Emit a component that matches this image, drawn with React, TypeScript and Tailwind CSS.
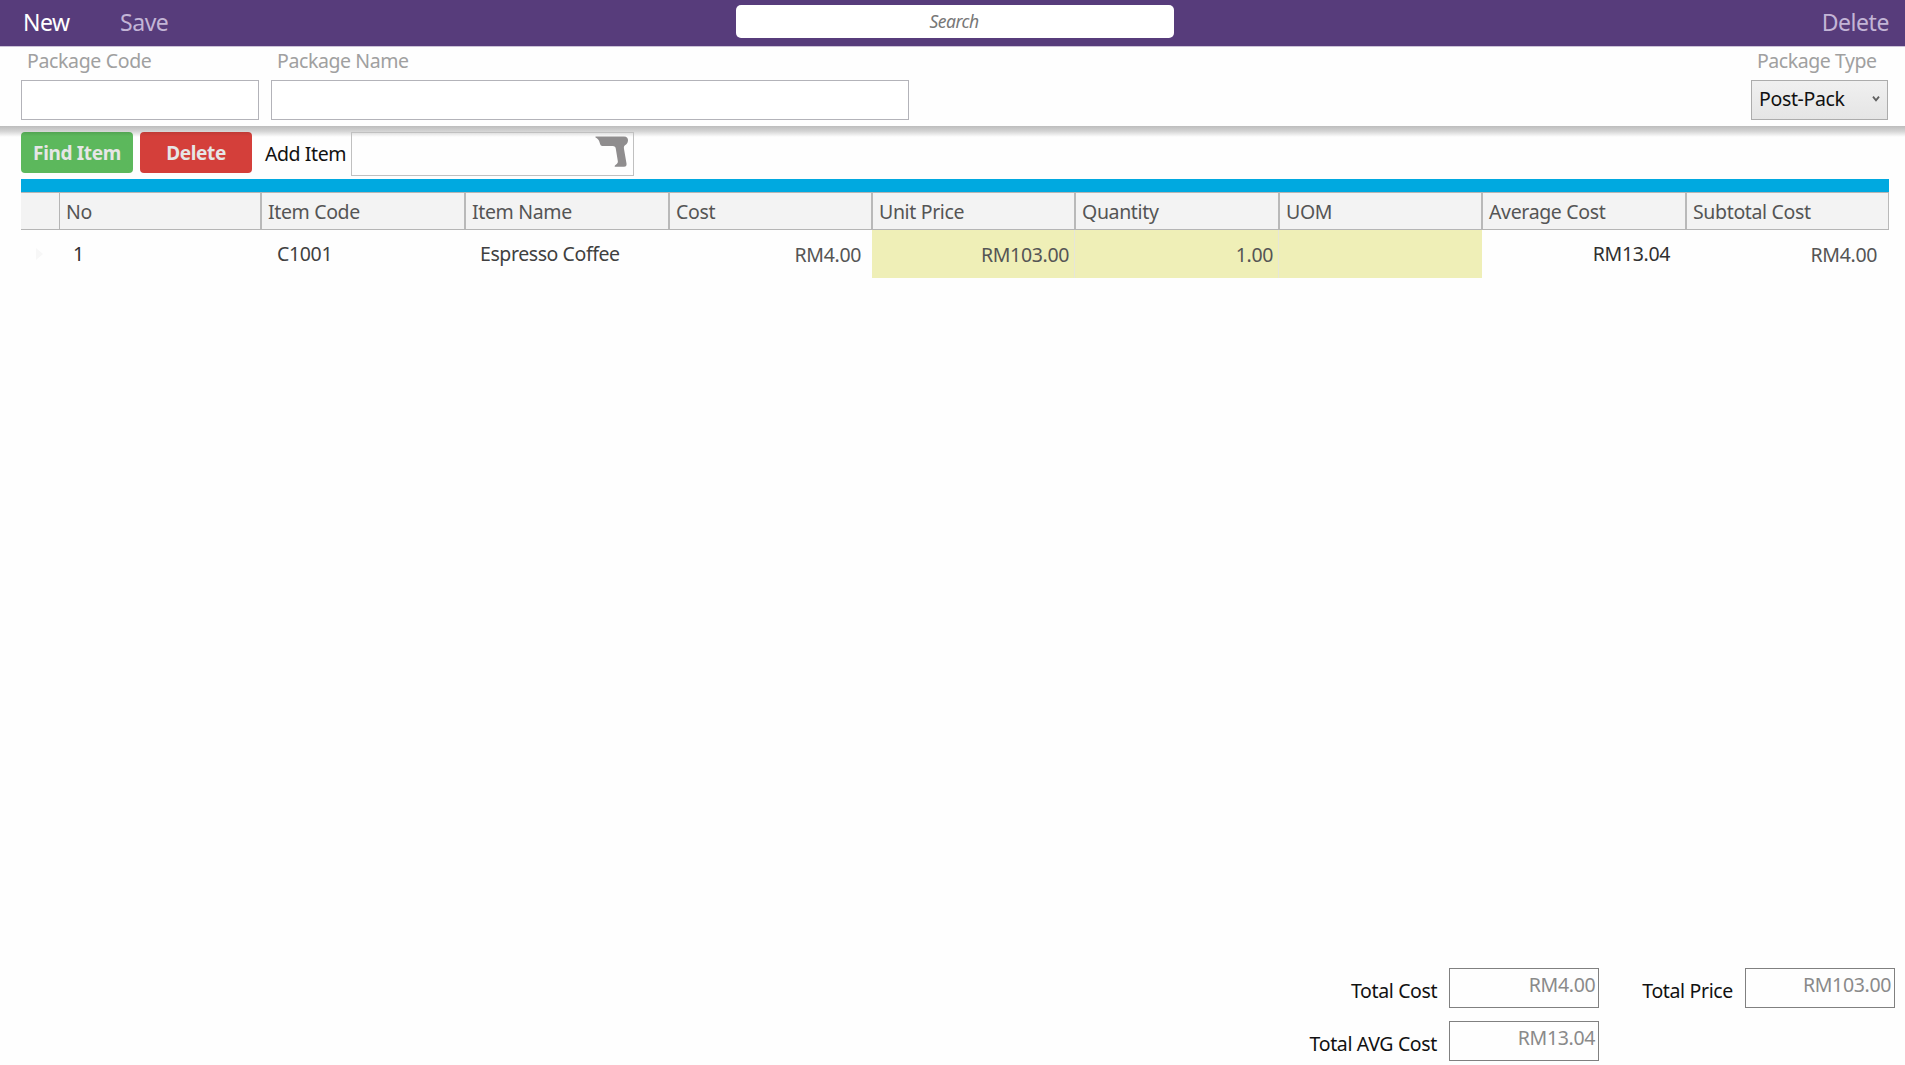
import React from 'react';

interface Column {
  title: string;
  value: string;
  head: string;
  cell: string;
}

// each column carries its own header and cell spacing
const columns: Column[] = [
  { title: 'No', value: '1', head: 'w-[202px]', cell: 'pl-[14px] text-[#303030]' },
  { title: 'Item Code', value: 'C1001', head: 'w-[204px]', cell: 'pl-[16px] text-[#404040]' },
  { title: 'Item Name', value: 'Espresso Coffee', head: 'w-[204px]', cell: 'pl-[15px] tracking-[-0.42px] text-[#404040]' },
  { title: 'Cost', value: 'RM4.00', head: 'w-[203px]', cell: 'justify-end pr-[11px] pt-[2px]' },
  { title: 'Unit Price', value: 'RM103.00', head: 'w-[203px]', cell: 'justify-end pr-[5px] pt-[2px] bg-[#efefb7] border-r border-[#e6e6d8]' },
  { title: 'Quantity', value: '1.00', head: 'w-[204px]', cell: 'justify-end pr-[5px] pt-[2px] bg-[#efefb7] border-r border-[#e6e6d8]' },
  { title: 'UOM', value: '', head: 'w-[203px]', cell: 'bg-[#efefb7]' },
  { title: 'Average Cost', value: 'RM13.04', head: 'w-[204px]', cell: 'justify-end pr-[16px] text-[#303030]' },
  { title: 'Subtotal Cost', value: 'RM4.00', head: 'w-[202px]', cell: 'justify-end pr-[11px] pt-[2px]' },
];

const ScannerIcon: React.FC = () => (
  <svg width="34" height="32" viewBox="0 0 34 32" fill="#8f8d8e">
    <path d="M0.5 0.5H29C32 0.5 33.2 2.2 33 4.5C32.8 7.2 31.5 8.3 30 9.3C28.8 10.1 28.8 11.5 29 13L31.5 27.5C31.8 29.5 31 30.8 29 30.8H20.5C19.3 30.8 19.5 29.8 20.2 29.2L22 27.7C22.8 27 23 26 22.8 25L20.8 12.8C20.6 11 19.6 10 17.8 10H7.5C6 10 5.5 9.2 5.1 8L4.3 5.6C3.7 3.6 2.5 2.2 0.5 1.4Z" />
  </svg>
);

const Total: React.FC<{ label: string; value: string }> = ({ label, value }) => (
  <div className="flex">
    <span className="mt-[7px] mr-[12px] leading-[31px] tracking-[-0.35px] text-[#111]">{label}</span>
    <div className="flex h-10 w-[150px] justify-end border border-[#808080] pt-[3px] pr-[3px] leading-[26px] text-[#8a8a8a]">
      {value}
    </div>
  </div>
);

const App: React.FC = () => {
  return (
    <div className="flex h-[1065px] w-[1905px] flex-col overflow-hidden bg-[#fefefe] font-['Noto_Sans','Open_Sans',sans-serif] text-[19.5px] tracking-[-0.35px] text-[#555] whitespace-nowrap">
      {/* Top bar */}
      <header className="flex h-[46px] shrink-0 bg-[#573c7b] pr-[16px] pl-[23px] text-[23px] leading-[44px] tracking-[-0.45px] text-[#c3b5d6]">
        <span className="w-[97px] text-white">New</span>
        <span className="w-[616px]">Save</span>
        <div className="mt-[5px] h-[33px] w-[438px] rounded-[5px] bg-white pr-[2px] text-center text-[17.5px] leading-[33px] tracking-[-0.5px] text-[#777] italic">
          Search
        </div>
        <span className="ml-auto">Delete</span>
      </header>

      {/* Package fields */}
      <section className="flex h-20 shrink-0 border-t border-[#cbc2d7] pr-[17px] pl-[21px] text-[#a0a0a0]">
        <div className="mr-3">
          <div className="h-[33px] pl-[6px] leading-[28px]">Package Code</div>
          <div className="h-10 w-[238px] border border-[#b3b3b9] bg-white" />
        </div>
        <div>
          <div className="h-[33px] pl-[6px] leading-[28px] tracking-[-0.4px]">Package Name</div>
          <div className="h-10 w-[638px] border border-[#b3b3b9] bg-white" />
        </div>
        <div className="ml-auto">
          <div className="h-[33px] pl-[6px] leading-[28px] tracking-[-0.45px]">Package Type</div>
          <div className="flex h-10 w-[137px] items-center justify-between border border-[#acacac] bg-linear-to-b from-[#f0f0f0] to-[#e5e5e5] pr-[7px] pb-[2px] pl-[7px] text-[#111]">
            Post-Pack
            <svg width="8" height="6" viewBox="0 0 8 6" fill="none" stroke="#606060" strokeWidth="1.8">
              <path d="M1 0.6L4 4.4L7 0.6" />
            </svg>
          </div>
        </div>
      </section>

      {/* Item actions, under the drop shadow of the fields */}
      <section className="flex h-[52px] shrink-0 bg-linear-to-b from-[#bcbcbc] via-[#d4d4d4] via-[10%] to-[#fefefe] to-[21%] pt-[6px] pl-[21px]">
        <button className="mr-[7px] h-[41px] w-[112px] rounded-[4px] bg-linear-to-b from-[#52a452] to-[#5cb85c] to-[10%] pt-[2px] text-[19px] font-bold text-[#e6e6e6]">Find Item</button>
        <button className="h-[41px] w-[112px] rounded-[4px] bg-linear-to-b from-[#bf3a35] to-[#d43f3a] to-[10%] pt-[2px] text-[19px] font-bold text-[#e6e6e6]">Delete</button>
        <span className="w-[99px] pl-[13px] leading-[43px] tracking-[-0.42px] text-[#111]">Add Item</span>
        <div className="flex h-11 w-[283px] justify-end border border-[#c0c0c0] pt-[3px] pr-[4px]">
          <ScannerIcon />
        </div>
      </section>

      {/* Item grid */}
      <section className="w-[1889px] pl-[21px]">
        <div className="mt-px h-[13px] bg-[#00a9e0]" />
        <div className="flex h-[38px] border-y border-[#b5b5b5] bg-[#f3f3f3] leading-[38px] text-[#555]">
          <div className="w-[39px] border-r border-[#b5b5b5]" />
          {columns.map((col) => (
            <div key={col.title} className={`${col.head} border-r-2 border-[#b9b9b9] pl-[6px] last:border-r`}>
              {col.title}
            </div>
          ))}
        </div>
        <div className="flex h-[48px]">
          <div className="flex w-[38px] items-center pl-[15px]">
            <svg width="7" height="12" viewBox="0 0 7 12" fill="#f7f7f7">
              <path d="M0 0L7 6L0 12Z" />
            </svg>
          </div>
          {columns.map((col) => (
            <div key={col.title} className={`${col.head} ${col.cell} flex items-center`}>
              {col.value}
            </div>
          ))}
        </div>
      </section>

      {/* Totals */}
      <footer className="mt-auto flex flex-col gap-[13px] pr-[10px] pb-[4px]">
        <div className="flex justify-end gap-[43px]">
          <Total label="Total Cost" value="RM4.00" />
          <Total label="Total Price" value="RM103.00" />
        </div>
        <div className="flex justify-end pr-[296px]">
          <Total label="Total AVG Cost" value="RM13.04" />
        </div>
      </footer>
    </div>
  );
};

export default App;
